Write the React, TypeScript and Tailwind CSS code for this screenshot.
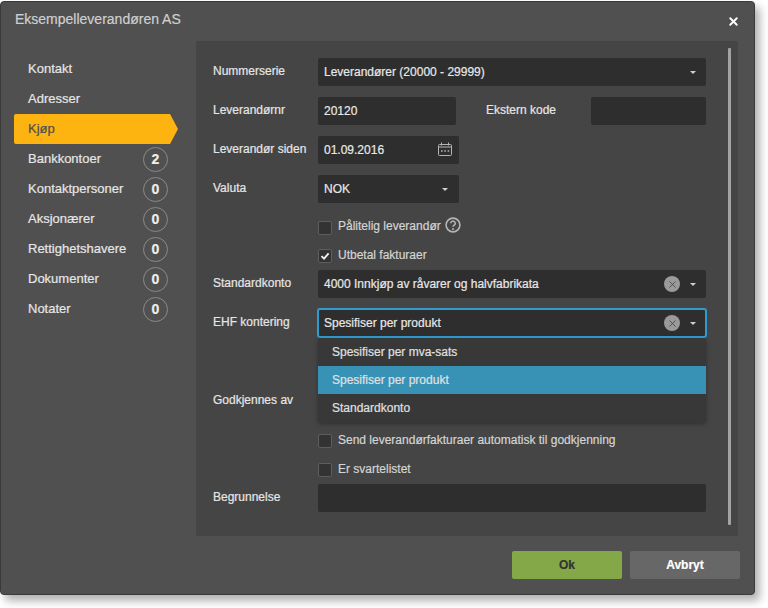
import { X } from "lucide-react";
import type { ReactNode } from "react";

const menu = [
  { title: "Kontakt" },
  { title: "Adresser" },
  { title: "Kjøp", active: true },
  { title: "Bankkontoer", count: 2 },
  { title: "Kontaktpersoner", count: 0 },
  { title: "Aksjonærer", count: 0 },
  { title: "Rettighetshavere", count: 0 },
  { title: "Dokumenter", count: 0 },
  { title: "Notater", count: 0 },
];

function Caret() {
  return <span className="h-0 w-0 border-x-[3px] border-t-[3px] border-x-transparent border-t-[#d0d0d0]" />;
}

function Clear() {
  return (
    <span className="mr-[10px] flex size-4 items-center justify-center rounded-full bg-[#9a9a9a]">
      <X className="size-[11px] text-[#333]" strokeWidth={1.5} />
    </span>
  );
}

function Field({ children, className }: { children?: ReactNode; className: string }) {
  return (
    <div className={`flex h-7 items-center rounded-[2px] bg-[#2e2e2e] pl-1.5 text-[#e8e8e8] ${className}`}>
      {children}
    </div>
  );
}

function Label({ children, className = "w-[105px]" }: { children: ReactNode; className?: string }) {
  return <div className={`shrink-0 -translate-y-px text-[#e6e6e6] ${className}`}>{children}</div>;
}

function Check({ checked, children }: { checked?: boolean; children: ReactNode }) {
  return (
    <label className="ml-[105px] flex h-[15px] items-center gap-[6px] text-[#d4d4d4]">
      <span className="flex size-[14px] items-center justify-center rounded-[2px] border border-[#5e5e5e] bg-[#333]">
        {checked && (
          <svg viewBox="0 0 10 10" className="size-[10px]">
            <path d="M1.5 5.2 4 7.6 8.6 2.4" fill="none" stroke="#f2f2f2" strokeWidth="1.8" />
          </svg>
        )}
      </span>
      <span className="flex -translate-y-px items-center">{children}</span>
    </label>
  );
}

export default function App() {
  return (
    <div className="h-[608px] w-[768px] bg-white pt-px font-['Liberation_Sans',Arial,sans-serif] text-[12px] [-webkit-text-stroke:0.2px]">
      <div className="flex h-[594px] w-[755px] flex-col rounded-[4px] border border-[#3a3a3a] bg-[#505050] shadow-[5px_6px_9px_rgba(0,0,0,0.3)]">
        <div className="flex h-[39px] shrink-0 items-center justify-between pb-[5px] pl-[14px] pr-[14px]">
          <span className="text-[14px] text-[#cfcfcf]">Eksempelleverandøren AS</span>
          <X className="size-[13px] translate-y-[2px] text-white" strokeWidth={3.5} />
        </div>

        <div className="flex h-[495px] shrink-0">
          <nav className="w-[195px] shrink-0 pl-[13px] pt-[13px] text-[13px]">
            {menu.map((item) =>
              item.active ? (
                <div
                  key={item.title}
                  className="flex h-[30px] w-[164px] items-center rounded-l-[2px] bg-[#fdb410] pl-[14px] text-[#4f4f4f] [clip-path:polygon(0_0,156px_0,164px_50%,156px_100%,0_100%)]"
                >
                  {item.title}
                </div>
              ) : (
                <div key={item.title} className="flex h-[30px] w-[154px] items-center justify-between pl-[14px] text-[#e6e6e6]">
                  {item.title}
                  {item.count !== undefined && (
                    <span className="flex size-[25px] items-center justify-center rounded-full border border-[#8a8a8a] text-[14px] font-bold text-[#eee]">
                      {item.count}
                    </span>
                  )}
                </div>
              ),
            )}
          </nav>

          <div className="relative w-[542px] shrink-0 rounded-[2px] bg-[#454545] pl-[17px] pt-[17px]">
            <div className="flex h-7 w-[493px] items-center">
              <Label>Nummerserie</Label>
              <Field className="flex-1 justify-between pr-[10px]">
                Leverandører (20000 - 29999)
                <Caret />
              </Field>
            </div>

            <div className="mt-[11px] flex h-7 w-[493px] items-center">
              <Label>Leverandørnr</Label>
              <Field className="w-[138px]">20120</Field>
              <div className="ml-[30px] w-[105px] -translate-y-px text-[#e6e6e6]">Ekstern kode</div>
              <Field className="w-[115px]" />
            </div>

            <div className="mt-[11px] flex h-7 items-center">
              <Label>Leverandør siden</Label>
              <Field className="w-[141px] justify-between pr-[6px]">
                01.09.2016
                <svg viewBox="0 0 15 15" className="size-[15px] -translate-y-px" fill="none" stroke="#b5b5b5">
                  <rect x="0.5" y="2.5" width="13" height="11" rx="1" />
                  <path d="M3.5 0.5v3M10.5 0.5v3M0.5 5h13" />
                  <path d="M3 9h1.6M6.3 9h1.6M9.6 9h1.6" strokeWidth="1.5" />
                </svg>
              </Field>
            </div>

            <div className="mt-[11px] flex h-7 items-center">
              <Label>Valuta</Label>
              <Field className="w-[141px] justify-between pr-[11px]">
                NOK
                <Caret />
              </Field>
            </div>

            <div className="mt-[17px]">
              <Check>
                <span className="-translate-y-px">Pålitelig leverandør</span>
                <svg viewBox="0 0 16 16" className="ml-1 size-4 -translate-y-[2px]">
                  <circle cx="8" cy="8" r="6.9" fill="none" stroke="#b5b5b5" strokeWidth="1.6" />
                  <path d="M5.8 6.2a2.2 2.2 0 1 1 3.4 1.9c-.8.5-1.2.9-1.2 1.7" fill="none" stroke="#b5b5b5" strokeWidth="1.6" />
                  <circle cx="8" cy="11.9" r="1" fill="#b5b5b5" />
                </svg>
              </Check>
            </div>
            <div className="mt-[13px]">
              <Check checked>Utbetal fakturaer</Check>
            </div>

            <div className="mt-[7px] flex h-7 w-[493px] items-center">
              <Label>Standardkonto</Label>
              <Field className="flex-1 pr-[10px]">
                <span className="flex-1">4000 Innkjøp av råvarer og halvfabrikata</span>
                <Clear />
                <Caret />
              </Field>
            </div>

            <div className="relative mt-[11px] flex h-7 w-[493px] items-center">
              <Label>EHF kontering</Label>
              <div className="flex h-7 flex-1 items-center rounded-[2px] bg-[#2e2e2e] pl-1.5 pr-[10px] text-[#e8e8e8] outline-2 -outline-offset-1 outline-[#2f9bd0]">
                <span className="flex-1">Spesifiser per produkt</span>
                <Clear />
                <Caret />
              </div>
              <div className="absolute left-[105px] top-[29px] z-10 w-[388px] rounded-b-[2px] bg-[#383838] text-[#e0e0e0] shadow-[0_2px_4px_rgba(0,0,0,0.3)]">
                <div className="flex h-7 items-center pl-[14px]">Spesifiser per mva-sats</div>
                <div className="flex h-7 items-center bg-[#3892b6] pl-[14px]">Spesifiser per produkt</div>
                <div className="flex h-7 items-center pl-[14px]">Standardkonto</div>
              </div>
            </div>

            <div className="mt-[50px] flex h-7 items-center">
              <Label>Godkjennes av</Label>
            </div>

            <div className="mt-[18px]">
              <Check>Send leverandørfakturaer automatisk til godkjenning</Check>
            </div>
            <div className="mt-[14px]">
              <Check>Er svartelistet</Check>
            </div>

            <div className="mt-[7px] flex h-7 w-[493px] items-center">
              <Label>Begrunnelse</Label>
              <Field className="flex-1" />
            </div>

            <div className="absolute bottom-[11px] right-[7px] top-[7px] w-[3px] rounded-[1px] bg-[#a3a3a3]" />
          </div>
        </div>

        <div className="flex justify-end gap-2 pr-[14px] pt-[15px]">
          <button className="h-7 w-[110px] rounded-[2px] bg-[#84a748] font-bold text-[#333]">Ok</button>
          <button className="h-7 w-[110px] rounded-[2px] bg-[#676767] font-bold text-white">Avbryt</button>
        </div>
      </div>
    </div>
  );
}
